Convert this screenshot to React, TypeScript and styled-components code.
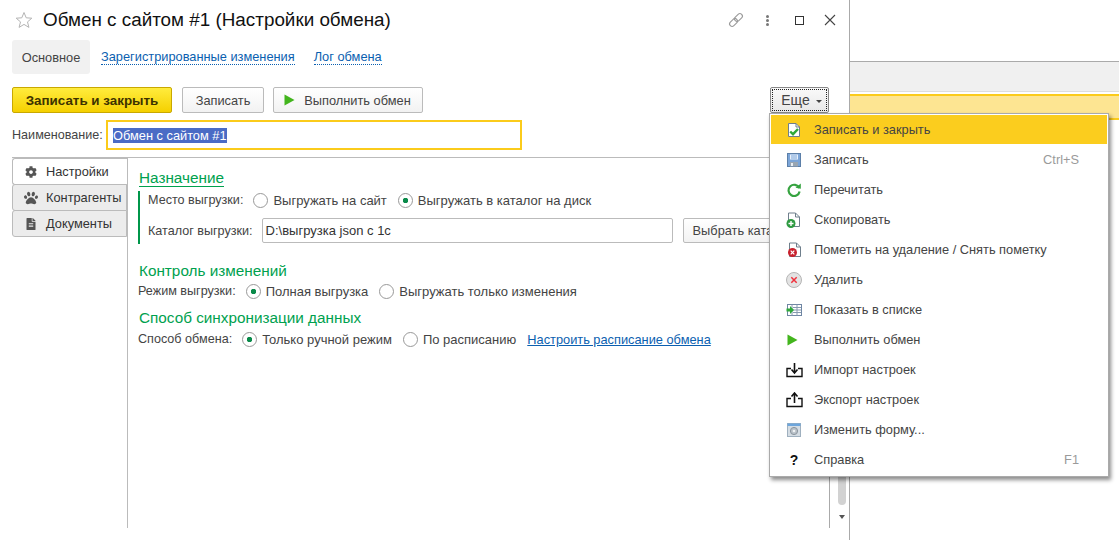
import React from 'react';
import styled, { createGlobalStyle } from 'styled-components';
import { FaCog, FaPaw, FaFileAlt } from 'react-icons/fa';

const GlobalStyle = createGlobalStyle`
  html, body {
    margin: 0;
    padding: 0;
    background: white;
  }
  * {
    box-sizing: border-box;
  }
`;

function Play({ size = 12 }: { size?: number }) {
  return (
    <svg width={size} height={size} viewBox='0 0 12 12'>
      <path d='M1.5 0.5 L11.5 6 L1.5 11.5 Z' fill='#43b51d' />
    </svg>
  );
}

function DocCheck() {
  return (
    <svg width='16' height='16' viewBox='0 0 16 16'>
      <path d='M2.5 1.5 H10 L13.5 5 V14.5 H2.5 Z' fill='#fff' stroke='#6f7f8c' />
      <path d='M10 1.5 V5 H13.5' fill='none' stroke='#6f7f8c' />
      <path d='M4.2 9.5 L7 12.2 L12 7' fill='none' stroke='#2fa83a' strokeWidth='2.4' />
    </svg>
  );
}

function Floppy() {
  return (
    <svg width='16' height='16' viewBox='0 0 16 16'>
      <rect x='1.5' y='1.5' width='13' height='13' fill='#7ba5d8' stroke='#5c7fa8' />
      <rect x='4' y='2.5' width='8' height='5' fill='#e8f0fa' />
      <path d='M5 4 H11 M5 6 H11' stroke='#7ba5d8' />
      <rect x='4' y='10' width='8' height='4.5' fill='#9aa6b2' />
      <rect x='5' y='11' width='2' height='3' fill='#e8eef4' />
    </svg>
  );
}

function Reload() {
  return (
    <svg width='16' height='16' viewBox='0 0 16 16'>
      <path d='M13.2 6 A5.6 5.6 0 1 0 13.6 9.5' fill='none' stroke='#35a33f' strokeWidth='2.2' />
      <path d='M9.5 5.8 L14.8 6.8 L14.8 1.5 Z' fill='#35a33f' />
    </svg>
  );
}

function DocCopy() {
  return (
    <svg width='16' height='16' viewBox='0 0 16 16'>
      <path d='M2.5 1 H9.5 L13.5 5 V14.5 H2.5 Z' fill='#fff' stroke='#6f7f8c' />
      <path d='M9.5 1 V5 H13.5' fill='none' stroke='#6f7f8c' />
      <circle cx='5' cy='11.5' r='4.5' fill='#2e9a41' />
      <path d='M2.5 11.5 H7.5 M5 9 V14' stroke='#fff' strokeWidth='1.4' />
    </svg>
  );
}

function DocDelete() {
  return (
    <svg width='16' height='16' viewBox='0 0 16 16'>
      <path d='M3.5 1 H10.5 L14.5 5 V14.5 H3.5 Z' fill='#fff' stroke='#6f7f8c' />
      <path d='M10.5 1 V5 H14.5' fill='none' stroke='#6f7f8c' />
      <circle cx='6.5' cy='10.5' r='4.5' fill='#c8202c' />
      <path d='M4.7 8.7 L8.3 12.3 M8.3 8.7 L4.7 12.3' stroke='#fff' strokeWidth='1.2' />
    </svg>
  );
}

function CircleDelete() {
  return (
    <svg width='16' height='16' viewBox='0 0 16 16'>
      <circle cx='8' cy='8' r='7.5' fill='#e3e3e3' stroke='#b5b5b5' />
      <path d='M5.3 5.3 L10.7 10.7 M10.7 5.3 L5.3 10.7' stroke='#f0303c' strokeWidth='1.5' />
    </svg>
  );
}

function ShowInList() {
  return (
    <svg width='16' height='16' viewBox='0 0 16 16'>
      <rect x='1.5' y='2.5' width='14' height='11' fill='#fff' stroke='#6f86a3' />
      <path d='M6 2.5 V13.5 M11 2.5 V13.5 M7 5.5 H15 M7 8 H15 M7 10.5 H15' stroke='#8699b0' />
      <path d='M0.5 6.5 H4 V4 L8 8 L4 12 V9.5 H0.5 Z' fill='#2fa83a' />
    </svg>
  );
}

function ImportIcon() {
  return (
    <svg width='17' height='16' viewBox='0 0 17 16'>
      <path d='M5 6.5 H1 V14.5 H16 V6.5 H12' fill='none' stroke='#111' strokeWidth='1.4' />
      <path d='M8.5 1 V10 M5.5 7.5 L8.5 11 L11.5 7.5' fill='none' stroke='#111' strokeWidth='1.6' />
    </svg>
  );
}

function ExportIcon() {
  return (
    <svg width='17' height='16' viewBox='0 0 17 16'>
      <path d='M5 6.5 H1 V14.5 H16 V6.5 H12' fill='none' stroke='#111' strokeWidth='1.4' />
      <path d='M8.5 11 V2 M5.5 4.5 L8.5 1 L11.5 4.5' fill='none' stroke='#111' strokeWidth='1.6' />
    </svg>
  );
}

function FormIcon() {
  return (
    <svg width='16' height='16' viewBox='0 0 16 16'>
      <rect x='1.5' y='1.5' width='13' height='13' fill='#d5dde4' stroke='#9fb0bf' />
      <rect x='1.5' y='1.5' width='13' height='2.5' fill='#6ea6dc' />
      <circle cx='8' cy='9' r='3.6' fill='#b9c1c8' stroke='#8b959e' />
      <circle cx='8' cy='9' r='1.3' fill='#eef1f3' />
    </svg>
  );
}

function HelpIcon() {
  return <SHelp>?</SHelp>;
}

const menuItems = [
  { label: 'Записать и закрыть', Icon: DocCheck, active: true },
  { label: 'Записать', Icon: Floppy, shortcut: 'Ctrl+S' },
  { label: 'Перечитать', Icon: Reload },
  { label: 'Скопировать', Icon: DocCopy },
  { label: 'Пометить на удаление / Снять пометку', Icon: DocDelete },
  { label: 'Удалить', Icon: CircleDelete },
  { label: 'Показать в списке', Icon: ShowInList },
  { label: 'Выполнить обмен', Icon: Play },
  { label: 'Импорт настроек', Icon: ImportIcon },
  { label: 'Экспорт настроек', Icon: ExportIcon },
  { label: 'Изменить форму...', Icon: FormIcon },
  { label: 'Справка', Icon: HelpIcon, shortcut: 'F1' },
];

function App() {
  return (
    <SPage>
      <GlobalStyle />
      <SWindow>
        <STitleRow>
          <svg width='18' height='18' viewBox='0 0 18 18'>
            <path
              d='M9 1.5 L11.2 6.8 L16.8 7.2 L12.5 10.9 L13.9 16.4 L9 13.4 L4.1 16.4 L5.5 10.9 L1.2 7.2 L6.8 6.8 Z'
              fill='none'
              stroke='#b4b4b4'
            />
          </svg>
          <STitle>Обмен с сайтом #1 (Настройки обмена)</STitle>
          <SWindowActions>
            <svg width='18' height='18' viewBox='0 0 18 18'>
              <g fill='none' stroke='#9a9a9a' strokeWidth='1.1' transform='rotate(-45 9 9)'>
                <rect x='1' y='6.5' width='9' height='5' rx='2.5' />
                <rect x='8' y='6.5' width='9' height='5' rx='2.5' />
              </g>
            </svg>
            <SDots>
              <i />
              <i />
              <i />
            </SDots>
            <SMaximize />
            <svg width='12' height='12' viewBox='0 0 12 12'>
              <path d='M1 1 L11 11 M11 1 L1 11' stroke='#444' strokeWidth='1.1' />
            </svg>
          </SWindowActions>
        </STitleRow>

        <SNavRow>
          <SNavActive>Основное</SNavActive>
          <SNavLink>Зарегистрированные изменения</SNavLink>
          <SNavLink>Лог обмена</SNavLink>
        </SNavRow>

        <SToolbar>
          <SPrimaryButton>Записать и закрыть</SPrimaryButton>
          <SSaveButton>Записать</SSaveButton>
          <SRunButton>
            <Play />
            Выполнить обмен
          </SRunButton>
          <SMoreButton>
            Еще
            <SCaret />
          </SMoreButton>
        </SToolbar>

        <SNameRow>
          <SNameLabel>Наименование:</SNameLabel>
          <SNameInput>
            <SSelected>Обмен с сайтом #1</SSelected>
          </SNameInput>
        </SNameRow>

        <SBody>
          <STabs>
            <STab $active>
              <STabIcon>
                <FaCog size={12} />
              </STabIcon>
              Настройки
            </STab>
            <STab>
              <STabIcon>
                <FaPaw size={14} />
              </STabIcon>
              Контрагенты
            </STab>
            <STab>
              <STabIcon>
                <FaFileAlt size={12} />
              </STabIcon>
              Документы
            </STab>
          </STabs>

          <SPanel>
            <SContent>
              <SUnderlinedHeading>Назначение</SUnderlinedHeading>
              <SGroup>
                <SFirstRow>
                  <SLabel>Место выгрузки:</SLabel>
                  <SRadio />
                  <SOption>Выгружать на сайт</SOption>
                  <SRadio $checked />
                  <SOption>Выгружать в каталог на диск</SOption>
                </SFirstRow>
                <SPathRow>
                  <SLabel>Каталог выгрузки:</SLabel>
                  <SPathInput>D:\выгрузка json с 1с</SPathInput>
                  <SPickButton>Выбрать каталог</SPickButton>
                </SPathRow>
              </SGroup>

              <SChangesHeading>Контроль изменений</SChangesHeading>
              <SRow>
                <SLabel>Режим выгрузки:</SLabel>
                <SRadio $checked />
                <SOption>Полная выгрузка</SOption>
                <SRadio />
                <SOption>Выгружать только изменения</SOption>
              </SRow>

              <SSyncHeading>Способ синхронизации данных</SSyncHeading>
              <SRow>
                <SLabel>Способ обмена:</SLabel>
                <SRadio $checked />
                <SOption>Только ручной режим</SOption>
                <SRadio />
                <SOption>По расписанию</SOption>
                <SScheduleLink>Настроить расписание обмена</SScheduleLink>
              </SRow>
            </SContent>
            <SScrollbar>
              <SThumb />
              <SArrowDown />
            </SScrollbar>
          </SPanel>
        </SBody>
      </SWindow>

      <SBackdrop>
        <SGrayStrip />
        <SYellowStrip />
      </SBackdrop>

      <SMenu>
        {menuItems.map(({ label, Icon, active, shortcut }) => (
          <SMenuItem key={label} $active={active}>
            <SMenuIcon>
              <Icon />
            </SMenuIcon>
            <SMenuLabel>{label}</SMenuLabel>
            {shortcut && <SShortcut>{shortcut}</SShortcut>}
          </SMenuItem>
        ))}
      </SMenu>
    </SPage>
  );
}

export default App;

const SPage = styled.div`
  position: relative;
  display: flex;
  width: 1119px;
  height: 540px;
  overflow: hidden;
  color: #444;
  font-family: 'Liberation Sans', Arial, sans-serif;
  font-size: 12.8px;
  background: white;
`;

const SWindow = styled.div`
  width: 850px;
  height: 540px;
  display: flex;
  flex-direction: column;
  border-right: 1px solid #aaa;
`;

const STitleRow = styled.div`
  height: 40px;
  display: flex;
  align-items: center;
  padding: 0 13px 0 15px;
  flex-shrink: 0;
`;

const STitle = styled.div`
  margin-left: 10px;
  color: #111;
  font-size: 18.85px;
  white-space: nowrap;
`;

const SWindowActions = styled.div`
  margin-left: auto;
  display: flex;
  align-items: center;
  gap: 20px;
`;

const SDots = styled.div`
  margin: 0 6px 0 1px;
  display: flex;
  flex-direction: column;
  gap: 1px;

  i {
    display: block;
    width: 3px;
    height: 3px;
    border-radius: 50%;
    background: #777;
  }
`;

const SMaximize = styled.div`
  width: 9px;
  height: 9px;
  border: 1px solid #333;
`;

const SNavRow = styled.div`
  height: 34px;
  display: flex;
  align-items: center;
  padding-left: 12px;
  gap: 19px;
  flex-shrink: 0;
`;

const SNavActive = styled.div`
  width: 78px;
  height: 34px;
  margin-right: -8px;
  display: flex;
  align-items: center;
  justify-content: center;
  border-radius: 3px;
  background: #f1f1f1;
`;

const SNavLink = styled.a`
  color: #0b5fb0;
  border-bottom: 1px dotted #0b5fb0;
  line-height: 14px;
`;

const SToolbar = styled.div`
  height: 26px;
  margin-top: 13px;
  display: flex;
  align-items: stretch;
  padding: 0 20px 0 12px;
  gap: 9px;
  flex-shrink: 0;
`;

const SButton = styled.div`
  display: flex;
  align-items: center;
  justify-content: center;
  gap: 9px;
  border: 1px solid #bbb;
  border-radius: 2px;
  background: linear-gradient(#fff, #f2f2f2);
  white-space: nowrap;
`;

const SPrimaryButton = styled(SButton)`
  width: 160px;
  margin-right: 1px;
  color: #3c3200;
  font-size: 13.4px;
  font-weight: 700;
  border-color: #c9a800;
  background: linear-gradient(#ffec3d, #f5d000);
`;

const SSaveButton = styled(SButton)`
  width: 82px;
`;

const SRunButton = styled(SButton)`
  width: 150px;
  padding-right: 2px;
`;

const SMoreButton = styled(SButton)`
  width: 59px;
  margin-left: auto;
  gap: 6px;
  padding-left: 4px;
  font-size: 14px;
  border: 1px solid #888;
  outline: 1px dotted #222;
  outline-offset: -3px;
  background: linear-gradient(#fafafa, #e8e8e8);
`;

const SCaret = styled.span`
  width: 0;
  height: 0;
  margin-top: 2px;
  border-left: 3px solid transparent;
  border-right: 3px solid transparent;
  border-top: 3px solid #444;
`;

const SNameRow = styled.div`
  height: 30px;
  margin-top: 7px;
  display: flex;
  align-items: center;
  padding-left: 12px;
  flex-shrink: 0;
`;

const SLabel = styled.span`
  font-size: 12.6px;
  white-space: nowrap;
`;

const SNameLabel = styled(SLabel)`
  width: 94px;
`;

const SNameInput = styled.div`
  width: 416px;
  height: 30px;
  display: flex;
  align-items: center;
  padding-left: 5px;
  border: 2px solid #fbcb1b;
`;

const SSelected = styled.span`
  color: white;
  line-height: 15px;
  background: #4a6bc5;
`;

const SBody = styled.div`
  flex: 1;
  min-height: 0;
  margin: 7px 0 12px 12px;
  display: flex;
  border-top: 1px solid #bbb;
`;

const STabs = styled.div`
  width: 115px;
  flex-shrink: 0;
  display: flex;
  flex-direction: column;
`;

const STab = styled.div<{ $active?: boolean }>`
  height: 27px;
  margin-top: ${(p) => (p.$active ? '0' : '-1px')};
  margin-right: ${(p) => (p.$active ? '-1px' : '0')};
  display: flex;
  align-items: center;
  gap: 8px;
  padding-left: 11px;
  color: #333;
  background: ${(p) => (p.$active ? 'white' : '#ececec')};
  border: 1px solid #bbb;
  border-right-color: ${(p) => (p.$active ? 'white' : '#bbb')};
  border-radius: 3px 0 0 3px;
`;

const STabIcon = styled.span`
  width: 14px;
  display: flex;
  justify-content: center;
  color: #555;
  flex-shrink: 0;
`;

const SPanel = styled.div`
  flex: 1;
  min-width: 0;
  display: flex;
  border-left: 1px solid #bbb;
`;

const SContent = styled.div`
  flex: 1;
  min-width: 0;
  padding: 12px 0 0 10px;
  border-right: 1px solid #aaa;
  overflow: hidden;
`;

const SHeading = styled.div`
  margin-left: 1px;
  color: #00a14e;
  font-size: 15.3px;
  line-height: 18px;
`;

const SUnderlinedHeading = styled(SHeading)`
  display: inline-block;
  border-bottom: 1px solid #00a14e;
  line-height: 16px;
`;

const SChangesHeading = styled(SHeading)`
  margin-bottom: 1px;
`;

const SSyncHeading = styled(SHeading)`
  margin-top: 8px;
  margin-bottom: 2px;
`;

const SGroup = styled.div`
  height: 53px;
  margin: 4px 0 18px;
  padding-left: 8px;
  border-left: 2px solid #00964a;
`;

const SRow = styled.div`
  height: 20px;
  display: flex;
  align-items: center;
  white-space: nowrap;
`;

const SFirstRow = styled(SRow)`
  height: 18px;
`;

const SPathRow = styled(SRow)`
  height: 25px;
  margin-top: 9px;
`;

const SRadio = styled.span<{ $checked?: boolean }>`
  width: 15px;
  height: 15px;
  margin: 0 5px 0 10px;
  flex-shrink: 0;
  border: 1px solid #999;
  border-radius: 50%;
  background: ${(p) =>
    p.$checked ? 'radial-gradient(circle, #0a8a4a 0 2.5px, white 3px)' : 'white'};
`;

const SOption = styled.span`
  margin-right: 1px;
  font-size: 13px;
`;

const SPathInput = styled.div`
  width: 411px;
  height: 25px;
  margin-left: 9px;
  flex-shrink: 0;
  display: flex;
  align-items: center;
  padding-left: 3px;
  color: #333;
  font-size: 13px;
  border: 1px solid #bbb;
  border-radius: 2px;
`;

const SPickButton = styled(SButton)`
  height: 25px;
  width: 120px;
  margin-left: 10px;
  flex-shrink: 0;
`;

const SScheduleLink = styled.a`
  margin-left: 10px;
  color: #0b5fb0;
  text-decoration: underline;
`;

const SScrollbar = styled.div`
  width: 19px;
  padding-left: 4px;
  flex-shrink: 0;
  display: flex;
  flex-direction: column;
  align-items: center;
`;

const SThumb = styled.div`
  width: 8px;
  height: 347px;
  border-radius: 0 0 4px 4px;
  background: #d2d2d2;
`;

const SArrowDown = styled.span`
  margin-top: 10px;
  width: 0;
  height: 0;
  border-left: 3px solid transparent;
  border-right: 3px solid transparent;
  border-top: 4px solid #555;
`;

const SBackdrop = styled.div`
  flex: 1;
  padding-top: 61px;
`;

const SGrayStrip = styled.div`
  height: 31px;
  border-top: 1px solid #aaa;
  border-bottom: 1px solid #ddd;
  background: #f0f0f0;
`;

const SYellowStrip = styled.div`
  height: 26px;
  margin-top: 2px;
  border-top: 2px solid #fbcb1b;
  border-bottom: 2px solid #fbcb1b;
  background: #fde592;
`;

const SMenu = styled.div`
  position: absolute;
  left: 769px;
  top: 113px;
  width: 340px;
  padding: 1px;
  border: 1px solid #aaa;
  background: white;
  box-shadow: 2px 3px 4px rgba(0, 0, 0, 0.45);
`;

const SMenuItem = styled.div<{ $active?: boolean }>`
  height: 29px;
  margin-bottom: 1px;
  display: flex;
  align-items: center;
  padding-right: 28px;
  background: ${(p) => (p.$active ? '#fbcd1e' : 'white')};
`;

const SMenuIcon = styled.span`
  width: 43px;
  padding-left: 15px;
  flex-shrink: 0;
  display: flex;
  align-items: center;
`;

const SMenuLabel = styled.span`
  white-space: nowrap;
`;

const SShortcut = styled.span`
  margin-left: auto;
  color: #9a9a9a;
`;

const SHelp = styled.span`
  width: 16px;
  text-align: center;
  color: #111;
  font-size: 14px;
  font-weight: 700;
`;
